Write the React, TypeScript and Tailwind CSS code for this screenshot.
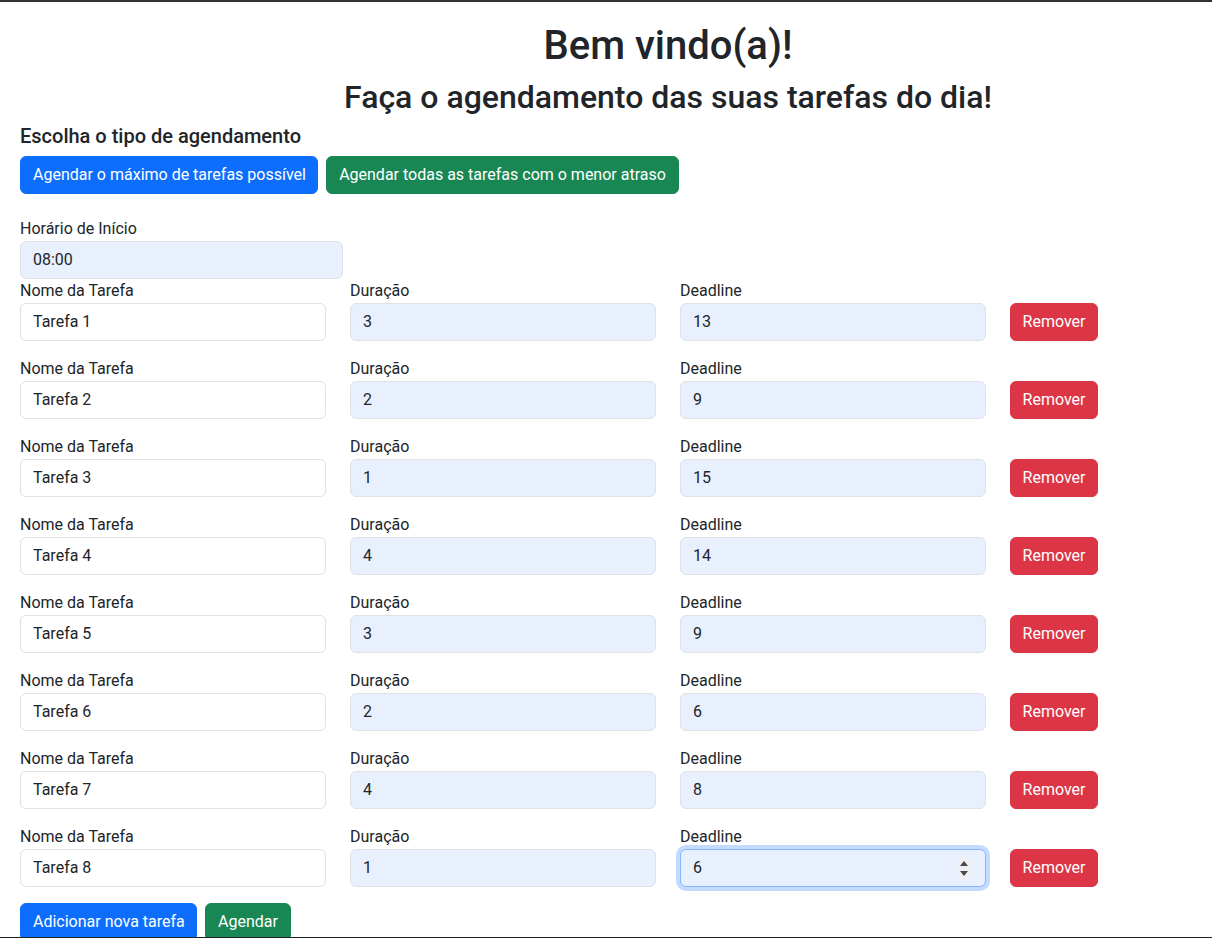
import React from "react";

const tasks = [
  { name: "Tarefa 1", dur: "3", dl: "13" },
  { name: "Tarefa 2", dur: "2", dl: "9" },
  { name: "Tarefa 3", dur: "1", dl: "15" },
  { name: "Tarefa 4", dur: "4", dl: "14" },
  { name: "Tarefa 5", dur: "3", dl: "9" },
  { name: "Tarefa 6", dur: "2", dl: "6" },
  { name: "Tarefa 7", dur: "4", dl: "8" },
  { name: "Tarefa 8", dur: "1", dl: "6" },
];

const inputBase =
  "block w-full h-[38px] px-3 pb-px rounded-[6px] border text-[16px] leading-6 text-[#212529] outline-none";

const btn =
  "h-[38px] px-3 rounded-[6px] border text-white text-[16px] leading-6 whitespace-nowrap";

function Field({
  label,
  value,
  fill,
  focused,
}: {
  label: string;
  value: string;
  fill?: boolean;
  focused?: boolean;
}) {
  return (
    <div className="w-[306px] shrink-0">
      <div className="text-[16px] leading-6 text-[#212529]">{label}</div>
      <div className="relative">
        <input
          readOnly
          defaultValue={value}
          className={
            inputBase +
            " " +
            (fill ? "bg-[#e8f0fe] " : "bg-white ") +
            (focused
              ? "border-[#86b7fe] shadow-[0_0_0_4px_rgba(13,110,253,0.25)]"
              : "border-[#dee2e6]")
          }
        />
        {focused && (
          <div className="absolute right-[15px] top-[9px] w-[14px] h-[21px] bg-[#eef0f3] flex flex-col items-center justify-center gap-[5px]">
            <svg width="8" height="5" viewBox="0 0 8 5">
              <path d="M0 5 L4 0 L8 5 Z" fill="#4a4a4a" />
            </svg>
            <svg width="8" height="5" viewBox="0 0 8 5">
              <path d="M0 0 L4 5 L8 0 Z" fill="#4a4a4a" />
            </svg>
          </div>
        )}
      </div>
    </div>
  );
}

export default function App() {
  return (
    <div
      className="w-[1212px] h-[938px] overflow-hidden bg-white border-t-2 border-[#333333] relative text-[#212529]"
      style={{ fontFamily: "Roboto, 'Noto Sans', sans-serif" }}
    >
      <div className="pl-5 pt-[20px] w-[1316px]">
        <h1 className="text-center text-[40px] leading-[48px] font-medium mb-2">
          Bem vindo(a)!
        </h1>
        <h2 className="text-center text-[32px] leading-[38px] font-medium mb-2">
          Faça o agendamento das suas tarefas do dia!
        </h2>
        <h5 className="text-[20px] leading-6 font-medium mb-2">
          Escolha o tipo de agendamento
        </h5>
        <div className="flex gap-2">
          <button className={btn + " w-[298px] px-0 bg-[#0d6efd] border-[#0d6efd]"}>
            Agendar o máximo de tarefas possível
          </button>
          <button className={btn + " w-[353px] px-0 bg-[#198754] border-[#198754]"}>
            Agendar todas as tarefas com o menor atraso
          </button>
        </div>

        <div className="mt-[23px] w-[323px]">
          <div className="text-[16px] leading-6">Horário de Início</div>
          <input
            readOnly
            defaultValue="08:00"
            className={inputBase + " bg-[#e8f0fe] border-[#dee2e6]"}
          />
        </div>

        <div className="flex flex-col gap-4">
          {tasks.map((t, i) => (
            <div key={i} className="flex gap-6 items-end">
              <Field label="Nome da Tarefa" value={t.name} />
              <Field label="Duração" value={t.dur} fill />
              <Field label="Deadline" value={t.dl} fill focused={i === 7} />
              <button className="h-[38px] w-[88px] rounded-[6px] border border-[#dc3545] bg-[#dc3545] text-white text-[16px] leading-6">
                Remover
              </button>
            </div>
          ))}
        </div>

        <div className="flex gap-2 mt-4">
          <button className={btn + " w-[177px] px-0 bg-[#0d6efd] border-[#0d6efd]"}>
            Adicionar nova tarefa
          </button>
          <button className={btn + " w-[86px] px-0 bg-[#198754] border-[#198754]"}>
            Agendar
          </button>
        </div>
      </div>
      <div className="absolute left-0 right-0 bottom-0 h-px bg-[#222222]" />
    </div>
  );
}
